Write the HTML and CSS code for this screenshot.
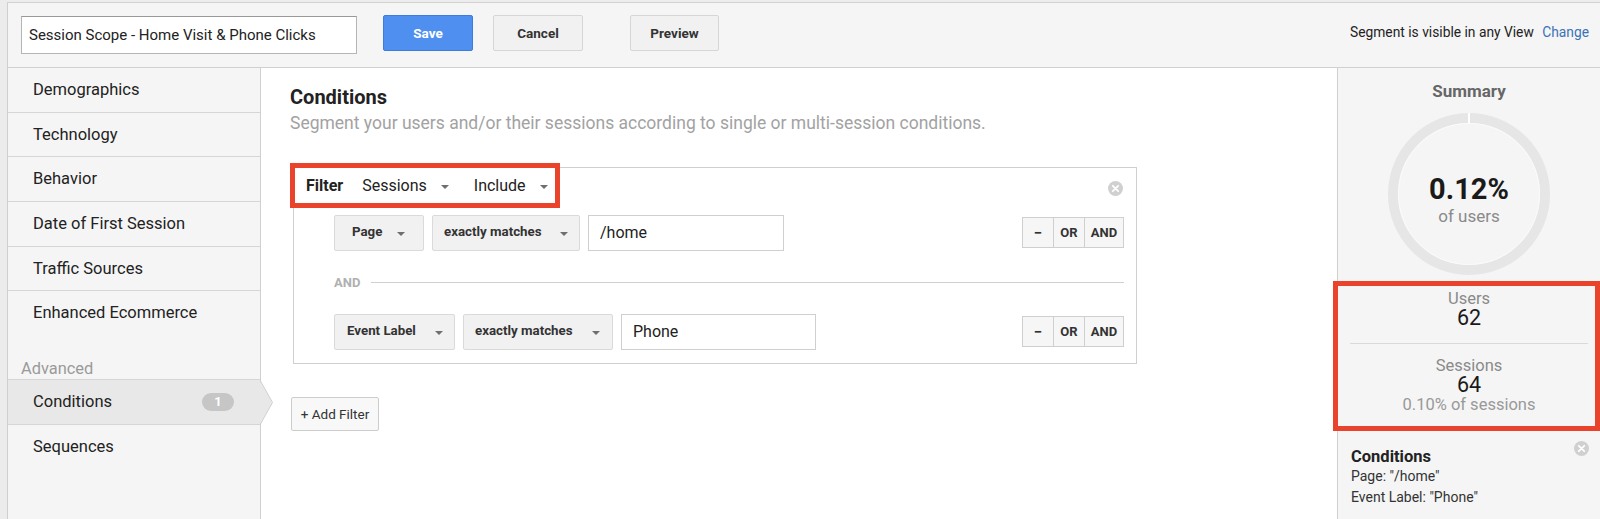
FILE: index.html
```html
<!DOCTYPE html>
<html lang="en">
<head>
<meta charset="utf-8">
<title>Segment editor</title>
<link rel="stylesheet" href="styles.css">
</head>
<body>
<div class="app">
  <header class="topbar">
    <div class="name-input">Session Scope - Home Visit &amp; Phone Clicks</div>
    <button class="btn btn-primary">Save</button>
    <button class="btn btn-cancel">Cancel</button>
    <button class="btn btn-preview">Preview</button>
    <div class="visibility">Segment is visible in any View <a class="change">Change</a></div>
  </header>
  <div class="content">
    <nav class="sidebar">
      <div class="nav-group">
        <div class="nav-item">Demographics</div>
        <div class="nav-item">Technology</div>
        <div class="nav-item">Behavior</div>
        <div class="nav-item">Date of First Session</div>
        <div class="nav-item">Traffic Sources</div>
        <div class="nav-item">Enhanced Ecommerce</div>
      </div>
      <div class="nav-label">Advanced</div>
      <div class="nav-group nav-advanced">
        <div class="nav-item nav-active">Conditions <span class="badge">1</span>
          <svg class="nav-pointer" width="14" height="43" viewBox="0 0 14 43"><polygon points="0,0 12.5,21.5 0,43" fill="#e8e8e8"/><polyline points="0.5,0 12.5,21.5 0.5,43" fill="none" stroke="#cfcfcf" stroke-width="1"/></svg>
        </div>
        <div class="nav-item">Sequences</div>
      </div>
    </nav>
    <main class="main">
      <h1 class="title">Conditions</h1>
      <p class="subtitle">Segment your users and/or their sessions according to single or multi-session conditions.</p>
      <div class="filter-box">
        <svg class="close-icon box-close" width="15" height="15" viewBox="0 0 15 15"><circle cx="7.5" cy="7.5" r="7.5" fill="#d0d0d0"/><path d="M4.8 4.8 L10.2 10.2 M10.2 4.8 L4.8 10.2" stroke="#fff" stroke-width="1.8" stroke-linecap="round"/></svg>
        <div class="filter-head">
          <span class="filter-label">Filter</span>
          <span class="sel">Sessions <i class="caret"></i></span>
          <span class="sel sel-last">Include <i class="caret"></i></span>
        </div>
        <div class="cond-row">
          <div class="dd dd-page"><span>Page</span><i class="caret"></i></div>
          <div class="dd dd-match1"><span>exactly matches</span><i class="caret"></i></div>
          <div class="val">/home</div>
          <div class="ops"><span class="op op-minus">&minus;</span><span class="op">OR</span><span class="op op-and">AND</span></div>
        </div>
        <div class="and-sep"><span>AND</span><i class="and-line"></i></div>
        <div class="cond-row">
          <div class="dd dd-event"><span>Event Label</span><i class="caret"></i></div>
          <div class="dd dd-match2"><span>exactly matches</span><i class="caret"></i></div>
          <div class="val val2">Phone</div>
          <div class="ops"><span class="op op-minus">&minus;</span><span class="op">OR</span><span class="op op-and">AND</span></div>
        </div>
      </div>
      <button class="add-filter">+ Add Filter</button>
    </main>
    <aside class="summary">
      <div class="summary-title">Summary</div>
      <div class="ring">
        <svg width="162" height="162" viewBox="0 0 162 162"><circle cx="81" cy="81" r="76" fill="none" stroke="#e6e6e6" stroke-width="10"/><circle cx="81" cy="81" r="70.5" fill="none" stroke="#fbfbfb" stroke-width="1"/><rect x="80" y="0" width="2" height="11" fill="#ffffff"/></svg>
        <div class="ring-text">
          <div class="ring-pct">0.12%</div>
          <div class="ring-sub">of users</div>
        </div>
      </div>
      <div class="stats">
        <div class="stat-label">Users</div>
        <div class="stat-num">62</div>
        <div class="stat-divider"></div>
        <div class="stat-label">Sessions</div>
        <div class="stat-num">64</div>
        <div class="stat-label stat-pct">0.10% of sessions</div>
      </div>
      <div class="sum-conds">
        <svg class="close-icon sum-close" width="15" height="15" viewBox="0 0 15 15"><circle cx="7.5" cy="7.5" r="7.5" fill="#d0d0d0"/><path d="M4.8 4.8 L10.2 10.2 M10.2 4.8 L4.8 10.2" stroke="#fff" stroke-width="1.8" stroke-linecap="round"/></svg>
        <div class="sum-title">Conditions</div>
        <div class="sum-line">Page: "/home"</div>
        <div class="sum-line">Event Label: "Phone"</div>
      </div>
    </aside>
  </div>
</div>
</body>
</html>
```

FILE: styles.css
```css
html, body {
  margin: 0;
  padding: 0;
  background: #ececec;
  height: 100%;
  overflow: hidden;
}
body {
  font-family: Roboto, "Liberation Sans", Arial, sans-serif;
  color: #222;
}
.app {
  margin: 2px 0 0 7px;
  border-top: 1px solid #d2d2d2;
  border-left: 1px solid #cfcfcf;
  height: calc(100vh - 3px);
  display: flex;
  flex-direction: column;
  background: #f5f5f5;
}
.topbar {
  height: 64px;
  border-bottom: 1px solid #d0d0d0;
  display: flex;
  align-items: flex-start;
  padding-left: 13px;
  padding-right: 11px;
  flex-shrink: 0;
}
.name-input {
  box-sizing: border-box;
  width: 336px;
  height: 38px;
  margin-top: 13px;
  background: #fff;
  border: 1px solid #b5b5b5;
  border-top-color: #999;
  padding-left: 7px;
  font-size: 15px;
  line-height: 36px;
  color: #222;
}
.btn {
  box-sizing: border-box;
  height: 36px;
  width: 90px;
  margin-top: 12px;
  border-radius: 2px;
  font-family: Roboto, "Liberation Sans", Arial, sans-serif;
  font-weight: bold;
  font-size: 13.5px;
  padding: 0;
}
.btn-primary {
  margin-left: 26px;
  background: #4f8ff0;
  border: 1px solid #3d7be0;
  color: #fff;
}
.btn-cancel {
  margin-left: 20px;
  background: #f1f1f1;
  border: 1px solid #d6d6d6;
  color: #333;
}
.btn-preview {
  margin-left: 47px;
  width: 89px;
  background: #f1f1f1;
  border: 1px solid #d6d6d6;
  color: #333;
}
.visibility {
  margin-left: auto;
  margin-top: 19px;
  font-size: 13.8px;
  line-height: 20px;
  color: #222;
}
.change {
  color: #3a72b8;
  margin-left: 5px;
}
.content {
  flex: 1;
  display: flex;
  min-height: 0;
}
.sidebar {
  width: 252px;
  border-right: 1px solid #d0d0d0;
  background: #f5f5f5;
  flex-shrink: 0;
}
.nav-item {
  position: relative;
  height: 43.7px;
  line-height: 43.7px;
  padding-left: 25px;
  padding-right: 25px;
  font-size: 16.5px;
  color: #222;
  border-bottom: 1px solid #d6d6d6;
  display: flex;
  align-items: center;
  justify-content: space-between;
}
.nav-group .nav-item:last-child {
  border-bottom: none;
}
.nav-label {
  padding: 25px 0 1px 13px;
  line-height: 18px;
  font-size: 16.4px;
  color: #9a9a9a;
}
.nav-advanced {
  border-top: 1px solid #d6d6d6;
}
.nav-advanced .nav-active {
  background: #e8e8e8;
  border-bottom: 1px solid #d6d6d6;
}
.badge {
  width: 32px;
  height: 18px;
  border-radius: 9px;
  background: #c6c6c6;
  color: #fff;
  font-size: 13px;
  font-weight: bold;
  line-height: 18px;
  text-align: center;
  margin-right: 1px;
}
.nav-pointer {
  position: absolute;
  right: -14px;
  top: 1px;
}
.main {
  flex: 1;
  background: #fff;
  padding: 18px 0 0 29px;
  min-width: 0;
}
.title {
  margin: 0;
  font-size: 20px;
  line-height: 22px;
  font-weight: bold;
  color: #222;
}
.subtitle {
  margin: 5px 0 0;
  font-size: 17.5px;
  line-height: 20px;
  color: #a2a2a2;
}
.filter-box {
  position: relative;
  box-sizing: border-box;
  width: 844px;
  margin: 34px 0 0 3px;
  border: 1px solid #cfcfcf;
  padding: 0 12px 13px 0;
}
.close-icon {
  position: absolute;
  display: block;
}
.box-close {
  top: 13px;
  right: 13px;
}
.filter-head {
  display: inline-flex;
  align-items: center;
  height: 35px;
  margin: -5px 0 0 -4px;
  border: 5px solid #e9432b;
  background: #fff;
  padding: 0 7px 0 11px;
  font-size: 16px;
  color: #222;
}
.filter-label {
  font-weight: bold;
  margin-right: 19px;
}
.sel {
  display: inline-flex;
  align-items: center;
  gap: 14px;
}
.sel-last {
  margin-left: 25px;
}
.caret {
  display: inline-block;
  width: 0;
  height: 0;
  border-left: 4px solid transparent;
  border-right: 4px solid transparent;
  border-top: 4px solid #6f6f6f;
  margin-top: 2px;
}
.cond-row {
  display: flex;
  align-items: center;
  margin-top: 7px;
  padding-left: 40px;
  height: 36px;
}
.dd {
  box-sizing: border-box;
  height: 36px;
  display: flex;
  align-items: center;
  justify-content: space-between;
  background: #f1f1f1;
  border: 1px solid #dadada;
  border-radius: 2px;
  font-size: 13.3px;
  font-weight: bold;
  color: #333;
  margin-right: 8px;
  padding: 0 11px 0 11px;
}
.dd span {
  margin-top: -3px;
}
.dd-page {
  width: 90px;
  padding: 0 18px 0 17px;
}
.dd-match1 {
  width: 148px;
}
.dd-event {
  width: 121px;
  padding-left: 12px;
}
.dd-match2 {
  width: 150px;
  padding-right: 12px;
}
.val {
  box-sizing: border-box;
  width: 196px;
  height: 36px;
  border: 1px solid #cfcfcf;
  background: #fff;
  padding-left: 11px;
  font-size: 16px;
  line-height: 34px;
  color: #222;
}
.val2 {
  width: 195px;
}
.ops {
  margin-left: auto;
  display: flex;
  height: 31px;
  border: 1px solid #cfcfcf;
  box-sizing: border-box;
  margin-top: -1px;
}
.op {
  width: 30px;
  display: flex;
  align-items: center;
  justify-content: center;
  font-size: 13px;
  font-weight: bold;
  color: #333;
  background: #f6f6f6;
  border-left: 1px solid #cfcfcf;
}
.op-minus {
  border-left: none;
  font-size: 15px;
}
.op-and {
  width: 38px;
}
.cond-row + .and-sep {
  margin-top: 24px;
}
.and-sep {
  display: flex;
  align-items: center;
  padding-left: 40px;
  height: 14px;
  margin-bottom: 25px;
}
.and-sep span {
  font-size: 13px;
  font-weight: bold;
  color: #b0b0b0;
}
.and-line {
  flex: 1;
  height: 1px;
  background: #cfcfcf;
  margin-left: 11px;
  margin-top: 1px;
}
.and-sep + .cond-row {
  margin-top: 0;
}
.add-filter {
  margin: 33px 0 0 1px;
  height: 34px;
  width: 88px;
  box-sizing: border-box;
  background: #f8f8f8;
  border: 1px solid #cdcdcd;
  border-radius: 2px;
  font-family: Roboto, "Liberation Sans", Arial, sans-serif;
  font-size: 13.5px;
  color: #333;
  padding: 0;
}
.summary {
  width: 262px;
  flex-shrink: 0;
  border-left: 1px solid #d0d0d0;
  background: #f5f5f5;
  display: flex;
  flex-direction: column;
  align-items: stretch;
}
.summary-title {
  margin-top: 13px;
  text-align: center;
  font-size: 17px;
  line-height: 20px;
  font-weight: bold;
  color: #666;
}
.ring {
  position: relative;
  width: 162px;
  height: 162px;
  margin: 12px auto 0;
}
.ring svg {
  display: block;
}
.ring-text {
  position: absolute;
  inset: 0;
  box-sizing: border-box;
  padding-top: 11px;
  display: flex;
  flex-direction: column;
  align-items: center;
  justify-content: center;
}
.ring-pct {
  font-size: 29px;
  font-weight: bold;
  line-height: 32px;
  color: #1a1a1a;
}
.ring-sub {
  font-size: 17px;
  line-height: 22px;
  color: #8a8a8a;
}
.stats {
  position: relative;
  margin-top: 6px;
  height: 150px;
  box-sizing: border-box;
  padding-top: 9px;
  text-align: center;
}
.stats::after {
  content: "";
  position: absolute;
  top: 0;
  bottom: 0;
  left: -5px;
  right: 0;
  border: 5px solid #e9432b;
  pointer-events: none;
}
.stat-label {
  font-size: 16.5px;
  line-height: 18px;
  color: #8a8a8a;
}
.stat-num {
  font-size: 21.5px;
  line-height: 20px;
  color: #1a1a1a;
}
.stat-divider {
  height: 1px;
  background: #dadada;
  margin: 15px 12px 13px;
}
.stat-pct {
  margin-top: 1px;
  color: #999;
}
.sum-conds {
  position: relative;
  padding: 17px 13px 0;
}
.sum-close {
  top: 10px;
  right: 11px;
}
.sum-title {
  font-size: 16.5px;
  line-height: 18px;
  font-weight: bold;
  color: #222;
}
.sum-line {
  font-size: 14px;
  line-height: 21px;
  color: #333;
}
```
